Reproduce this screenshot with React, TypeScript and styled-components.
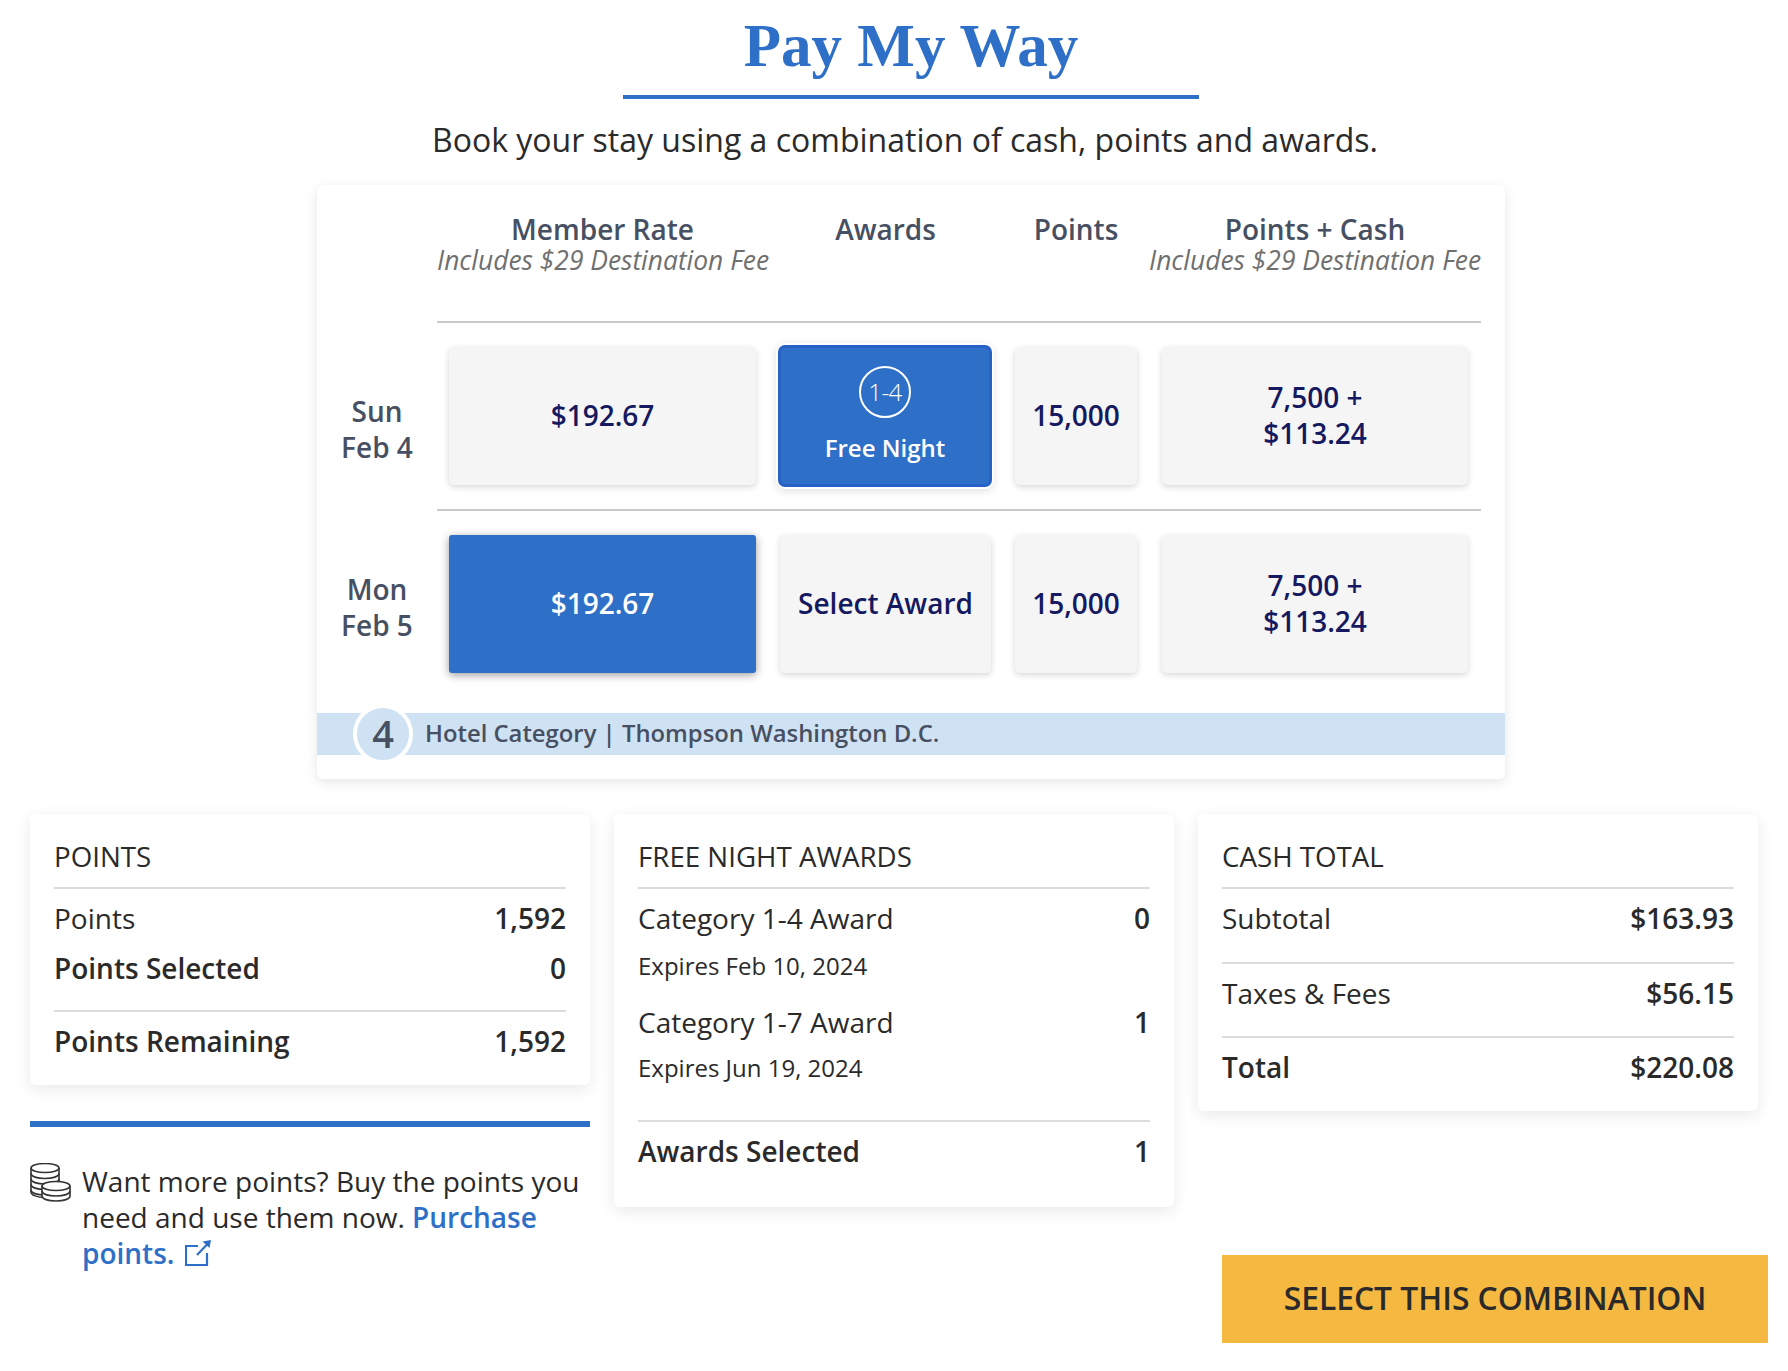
import React from 'react';
import styled, { createGlobalStyle } from 'styled-components';

const BLUE = '#2e70c8';
const NAVY = '#15195f';
const SLATE = '#475062';
const INK = '#2a2a2a';

const GlobalStyle = createGlobalStyle`
  html, body {
    margin: 0;
    padding: 0;
    background: #fff;
    color: ${INK};
    font-family: 'Open Sans', 'Liberation Sans', sans-serif;
  }
`;

const Page = styled.main`
  box-sizing: border-box;
  width: 1788px;
  height: 1371px;
  padding: 0 20px 0 30px;
  overflow: hidden;
`;

const Chooser = styled.section`
  width: 1188px;
  margin-left: 287px;
  display: flex;
  flex-direction: column;
  align-items: center;
`;

const Title = styled.h1`
  width: 576px;
  height: 95px;
  margin: 0;
  border-bottom: 4px solid ${BLUE};
  color: ${BLUE};
  font-family: 'Liberation Serif', serif;
  font-size: 61px;
  font-weight: 700;
  line-height: 92px;
  text-align: center;
`;

const Subtitle = styled.p`
  margin: 19px 12px 0 0;
  font-size: 32px;
  line-height: 44px;
`;

const RateCard = styled.div`
  box-sizing: border-box;
  width: 100%;
  height: 594px;
  margin-top: 23px;
  padding-top: 27px;
  background: #fff;
  border-radius: 6px;
  box-shadow: 0 3px 12px rgba(0, 0, 0, 0.1);
`;

const HeaderRow = styled.div`
  display: grid;
  grid-template-columns: 331px 235px 146px 332px;
  height: 109px;
  margin-left: 120px;
  text-align: center;
`;

const ColName = styled.div`
  color: ${SLATE};
  font-size: 28px;
  font-weight: 600;
  line-height: 34px;
`;

const ColNote = styled.div`
  color: #6f6f6f;
  font-size: 26.4px;
  font-style: italic;
  line-height: 28px;
  white-space: nowrap;
`;

const Night = styled.div`
  display: flex;
`;

const Day = styled.div<{ $shift: number }>`
  width: 120px;
  flex: none;
  display: flex;
  align-items: center;
  justify-content: center;
  padding-top: ${(p) => p.$shift}px;
  box-sizing: border-box;
  color: ${SLATE};
  font-size: 28px;
  font-weight: 600;
  line-height: 36px;
  text-align: center;
`;

const Slots = styled.div`
  display: grid;
  grid-template-columns: 331px 235px 146px 332px;
  width: 1044px;
  padding: 24px 0;
  border-top: 2px solid #c9c9c9;
`;

const Slot = styled.div<{ $active?: boolean }>`
  box-sizing: border-box;
  height: 138px;
  margin: 0 12px;
  padding-bottom: 2px;
  display: flex;
  flex-direction: column;
  align-items: center;
  justify-content: center;
  background: ${(p) => (p.$active ? BLUE : '#f5f5f5')};
  border-radius: ${(p) => (p.$active ? 3 : 5)}px;
  box-shadow: ${(p) => (p.$active ? '0 2px 8px rgba(0, 0, 0, 0.4)' : '0 2px 6px rgba(0, 0, 0, 0.16)')};
  color: ${(p) => (p.$active ? '#fff' : NAVY)};
  font-size: 28px;
  font-weight: 600;
  line-height: 36px;
  text-align: center;

  &:last-child {
    margin: 0 13px;
  }
`;

const AwardSlot = styled(Slot)`
  height: 142px;
  margin: -2px 11px -2px 10px;
  background: ${BLUE};
  border: 3px solid #2760c6;
  border-radius: 7px;
  box-shadow: 0 0 0 2px #fff, 0 2px 8px 2px rgba(0, 0, 0, 0.12);
  color: #fff;
`;

const AwardBadge = styled.span`
  box-sizing: border-box;
  width: 52px;
  height: 52px;
  display: flex;
  align-items: center;
  justify-content: center;
  border: 2px solid #fff;
  border-radius: 50%;
  font-size: 24px;
  font-weight: 300;
  letter-spacing: -0.5px;
`;

const AwardLabel = styled.span`
  margin-top: 13px;
  font-size: 24px;
  line-height: 34px;
`;

const CategoryBar = styled.div`
  position: relative;
  height: 42px;
  margin-top: 16px;
  padding-left: 108px;
  background: #cfe2f3;
  color: ${SLATE};
  font-size: 23.85px;
  font-weight: 600;
  line-height: 40px;
`;

const CategoryBadge = styled.span`
  position: absolute;
  left: 36px;
  top: -9px;
  box-sizing: border-box;
  width: 60px;
  height: 60px;
  padding-bottom: 2px;
  display: flex;
  align-items: center;
  justify-content: center;
  background: #cfe2f3;
  border: 4px solid #fff;
  border-radius: 50%;
  font-size: 38px;
  font-weight: 600;
`;

const Summary = styled.section`
  display: grid;
  grid-template-columns: 560px 560px 1fr;
  gap: 24px;
  align-items: start;
  margin-top: 35px;
`;

const Column = styled.div`
  display: flex;
  flex-direction: column;
`;

const Card = styled.article`
  box-sizing: border-box;
  width: 560px;
  padding: 24px;
  background: #fff;
  border-radius: 6px;
  box-shadow: 0 4px 16px rgba(0, 0, 0, 0.09);
`;

const CardTitle = styled.h2`
  margin: 0;
  padding-bottom: 12px;
  font-size: 27.7px;
  font-weight: 400;
  line-height: 37px;
`;

const Group = styled.div<{ $bottom: number }>`
  padding: 11px 0 ${(p) => p.$bottom}px;
  border-top: 2px solid #dcdcdc;
`;

const Line = styled.div<{ $bold?: boolean; $gap?: number }>`
  display: flex;
  justify-content: space-between;
  margin-top: ${(p) => p.$gap ?? 0}px;
  font-size: 28px;
  font-weight: ${(p) => (p.$bold ? 600 : 400)};
  line-height: 37px;
`;

const Amount = styled.span`
  font-weight: 600;
`;

const Expiry = styled.div<{ $gap: number }>`
  margin-top: ${(p) => p.$gap}px;
  font-size: 24px;
  line-height: 33px;
`;

const Rule = styled.hr`
  height: 6px;
  margin: 36px 0 0;
  border: 0;
  background: ${BLUE};
`;

const Promo = styled.div`
  display: flex;
  gap: 11px;
  margin-top: 36px;
  font-size: 28px;
  line-height: 36px;
`;

const CoinIcon = styled.svg`
  width: 41px;
  height: 39px;
  flex: none;
`;

const PromoLink = styled.a`
  color: ${BLUE};
  font-weight: 600;
  text-decoration: none;
`;

const LinkIcon = styled.svg`
  width: 26px;
  height: 26px;
  margin-left: 10px;
  vertical-align: -2px;
`;

const SelectButton = styled.button`
  height: 88px;
  margin: 144px 0 0 24px;
  padding: 0 0 4px;
  border: 0;
  background: #f5b840;
  color: ${INK};
  font-family: inherit;
  font-size: 31.8px;
  font-weight: 600;
`;

function Coins() {
  return (
    <CoinIcon viewBox="0 0 41 39" fill="#fff" stroke="#333" strokeWidth="1.6">
      <path d="M1 5v24c0 3 6 5.500 14 5.500s14-2.500 14-5.500V5" />
      <ellipse cx="15" cy="5" rx="14" ry="4.500" />
      <path
        d="M1 10.500c0 3 6 5 14 5s14-2 14-5M1 16c0 3 6 5 14 5s14-2 14-5M1 21.500c0 3 6 5 14 5s14-2 14-5M1 27c0 3 6 5 14 5s14-2 14-5"
        fill="none"
      />
      <path d="M12 23v10c0 3 6 5 14 5s14-2 14-5V23" />
      <ellipse cx="26" cy="23" rx="14" ry="4.500" />
      <path d="M12 28c0 3 6 5 14 5s14-2 14-5" fill="none" />
    </CoinIcon>
  );
}

function ExternalLink() {
  return (
    <LinkIcon viewBox="0 0 26 26" fill="none" stroke={BLUE} strokeWidth="2.2">
      <path d="M13 6H1v19h21V13" />
      <path d="M12 15L23 3.500" />
      <path d="M26 0l-8.500 1.500 7 6.500z" fill={BLUE} stroke="none" />
    </LinkIcon>
  );
}

const nights = [
  { week: 'Sun', date: 'Feb 4', shift: 27, bottomPick: false },
  { week: 'Mon', date: 'Feb 5', shift: 7, bottomPick: true },
];

export default function App(): JSX.Element {
  return (
    <Page>
      <GlobalStyle />
      <Chooser>
        <Title>Pay My Way</Title>
        <Subtitle>Book your stay using a combination of cash, points and awards.</Subtitle>
        <RateCard>
          <HeaderRow>
            <div>
              <ColName>Member Rate</ColName>
              <ColNote>Includes $29 Destination Fee</ColNote>
            </div>
            <ColName>Awards</ColName>
            <ColName>Points</ColName>
            <div>
              <ColName>Points + Cash</ColName>
              <ColNote>Includes $29 Destination Fee</ColNote>
            </div>
          </HeaderRow>
          {nights.map((night) => (
            <Night key={night.date}>
              <Day $shift={night.shift}>
                {night.week}
                <br />
                {night.date}
              </Day>
              <Slots>
                <Slot $active={night.bottomPick}>$192.67</Slot>
                {night.bottomPick ? (
                  <Slot>Select Award</Slot>
                ) : (
                  <AwardSlot>
                    <AwardBadge>1-4</AwardBadge>
                    <AwardLabel>Free Night</AwardLabel>
                  </AwardSlot>
                )}
                <Slot>15,000</Slot>
                <Slot>
                  7,500 +
                  <br />
                  $113.24
                </Slot>
              </Slots>
            </Night>
          ))}
          <CategoryBar>
            <CategoryBadge>4</CategoryBadge>
            Hotel Category | Thompson Washington D.C.
          </CategoryBar>
        </RateCard>
      </Chooser>

      <Summary>
        <Column>
          <Card>
            <CardTitle>POINTS</CardTitle>
            <Group $bottom={23}>
              <Line>
                <span>Points</span>
                <Amount>1,592</Amount>
              </Line>
              <Line $bold $gap={13}>
                <span>Points Selected</span>
                <span>0</span>
              </Line>
            </Group>
            <Group $bottom={1}>
              <Line $bold>
                <span>Points Remaining</span>
                <span>1,592</span>
              </Line>
            </Group>
          </Card>
          <Rule />
          <Promo>
            <Coins />
            <div>
              Want more points? Buy the points you need and use them now.{' '}
              <PromoLink href="#">
                Purchase points.
                <ExternalLink />
              </PromoLink>
            </div>
          </Promo>
        </Column>

        <Card>
          <CardTitle>FREE NIGHT AWARDS</CardTitle>
          <Group $bottom={36}>
            <Line>
              <span>Category 1-4 Award</span>
              <Amount>0</Amount>
            </Line>
            <Expiry $gap={12}>Expires Feb 10, 2024</Expiry>
            <Line $gap={22}>
              <span>Category 1-7 Award</span>
              <Amount>1</Amount>
            </Line>
            <Expiry $gap={10}>Expires Jun 19, 2024</Expiry>
          </Group>
          <Group $bottom={13}>
            <Line $bold>
              <span>Awards Selected</span>
              <span>1</span>
            </Line>
          </Group>
        </Card>

        <Column>
          <Card>
            <CardTitle>CASH TOTAL</CardTitle>
            <Group $bottom={25}>
              <Line>
                <span>Subtotal</span>
                <Amount>$163.93</Amount>
              </Line>
            </Group>
            <Group $bottom={24}>
              <Line>
                <span>Taxes &amp; Fees</span>
                <Amount>$56.15</Amount>
              </Line>
            </Group>
            <Group $bottom={1}>
              <Line $bold>
                <span>Total</span>
                <span>$220.08</span>
              </Line>
            </Group>
          </Card>
          <SelectButton>SELECT THIS COMBINATION</SelectButton>
        </Column>
      </Summary>
    </Page>
  );
}
